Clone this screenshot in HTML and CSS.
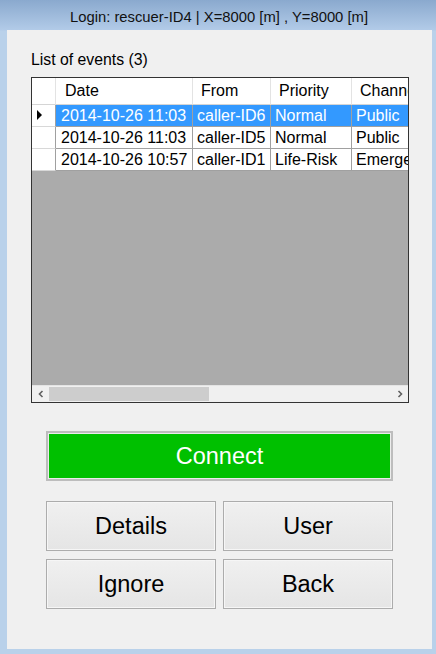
FILE: index.html
```html
<!DOCTYPE html>
<html>
<head>
<meta charset="utf-8">
<link rel="stylesheet" href="styles.css">
</head>
<body>
<div class="window">
  <div class="titlebar">Login: rescuer-ID4 | X=8000 [m] , Y=8000 [m]</div>
  <div class="client">
    <div class="label">List of events (3)</div>
    <div class="grid">
      <div class="row header">
        <div class="c rh"></div>
        <div class="c date">Date</div>
        <div class="c from">From</div>
        <div class="c prio">Priority</div>
        <div class="c chan">Channel</div>
      </div>
      <div class="row data selected">
        <div class="c rh"><span class="tri"></span></div>
        <div class="c date">2014-10-26 11:03</div>
        <div class="c from">caller-ID6</div>
        <div class="c prio">Normal</div>
        <div class="c chan">Public</div>
      </div>
      <div class="row data">
        <div class="c rh"></div>
        <div class="c date">2014-10-26 11:03</div>
        <div class="c from">caller-ID5</div>
        <div class="c prio">Normal</div>
        <div class="c chan">Public</div>
      </div>
      <div class="row data">
        <div class="c rh"></div>
        <div class="c date">2014-10-26 10:57</div>
        <div class="c from">caller-ID1</div>
        <div class="c prio">Life-Risk</div>
        <div class="c chan">Emergency</div>
      </div>
      <div class="empty"></div>
      <div class="hscroll">
        <div class="arrow"><svg width="8" height="8" viewBox="0 0 8 8"><path d="M5.5 1 L2.5 4 L5.5 7" fill="none" stroke="#606060" stroke-width="1.6"/></svg></div>
        <div class="track"><div class="thumb"></div></div>
        <div class="arrow"><svg width="8" height="8" viewBox="0 0 8 8"><path d="M2.5 1 L5.5 4 L2.5 7" fill="none" stroke="#606060" stroke-width="1.6"/></svg></div>
      </div>
    </div>
    <button class="connect">Connect</button>
    <div class="buttons">
      <button class="btn">Details</button>
      <button class="btn">User</button>
      <button class="btn">Ignore</button>
      <button class="btn">Back</button>
    </div>
  </div>
</div>
</body>
</html>
```
FILE: styles.css
```css
html, body {
  margin: 0;
  padding: 0;
}
body {
  width: 436px;
  height: 654px;
  overflow: hidden;
  font-family: "Liberation Sans", Arial, sans-serif;
}
.window {
  width: 436px;
  height: 654px;
  display: flex;
  flex-direction: column;
  background: linear-gradient(to bottom, #8aa9ce 0px, #b2cbe8 30px, #b9d1ea 31px, #b9d1ea 100%);
}
.titlebar {
  height: 30px;
  box-sizing: border-box;
  padding-top: 4px;
  padding-left: 2px;
  display: flex;
  align-items: center;
  justify-content: center;
  font-size: 14.8px;
  color: #111;
}
.client {
  flex: 1;
  margin: 0 4px 5px 7px;
  background: #f0f0f0;
  display: flex;
  flex-direction: column;
  padding-left: 24px;
}
.label {
  margin-top: 21px;
  font-size: 15.8px;
  line-height: 18px;
  color: #000;
}
.grid {
  margin-top: 8px;
  width: 378px;
  height: 326px;
  box-sizing: border-box;
  border: 1px solid #333;
  display: flex;
  flex-direction: column;
  overflow: hidden;
  background: #ababab;
}
.row {
  display: flex;
  flex: none;
  font-size: 16px;
  color: #000;
  white-space: nowrap;
}
.c {
  flex: none;
  box-sizing: border-box;
  overflow: hidden;
}
.rh { width: 24px; }
.date { width: 137px; }
.from { width: 78px; }
.prio { width: 81px; }
.chan { width: 100px; }
.header {
  height: 27px;
  background: #fff;
}
.header .c {
  height: 27px;
  line-height: 26px;
  padding-left: 8px;
  border-right: 1px solid #e3e3e3;
  border-bottom: 1px solid #d5d5d5;
}
.header .date { padding-left: 9px; }
.data .c {
  height: 22px;
  line-height: 21px;
  padding-left: 4px;
  background: #fff;
  border-right: 1px solid #a0a0a0;
  border-bottom: 1px solid #a0a0a0;
}
.data .rh {
  padding-left: 0;
  border-bottom-color: #d8d8d8;
  border-right-color: #a0a0a0;
  display: flex;
  align-items: center;
}
.selected .c {
  background: #3399ff;
  color: #fff;
}
.selected .rh {
  background: #fff;
}
.data .date { padding-left: 5px; }
.tri {
  margin-left: 5px;
  margin-top: -1px;
  width: 0;
  height: 0;
  border-top: 5px solid transparent;
  border-bottom: 5px solid transparent;
  border-left: 5px solid #000;
}
.empty {
  flex: 1;
  background: #ababab;
}
.hscroll {
  height: 17px;
  flex: none;
  display: flex;
  background: #f0f0f0;
  border-top: 1px solid #e4e4e4;
  box-sizing: border-box;
}
.arrow {
  width: 17px;
  flex: none;
  display: flex;
  align-items: center;
  justify-content: center;
}
.track {
  flex: 1;
  display: flex;
  align-items: center;
}
.thumb {
  width: 160px;
  height: 14px;
  background: #cdcdcd;
}
.connect {
  margin-top: 28px;
  margin-left: 15px;
  width: 347px;
  height: 50px;
  box-sizing: border-box;
  border: 2px solid #bdbdbd;
  box-shadow: inset 0 0 0 1px #ececec;
  background: #00c000;
  color: #fff;
  font-family: "Liberation Sans", Arial, sans-serif;
  font-size: 23.5px;
  padding: 0;
  padding-top: 1px;
}
.buttons {
  margin-top: 20px;
  margin-left: 15px;
  display: grid;
  grid-template-columns: 170px 170px;
  grid-auto-rows: 50px;
  column-gap: 7px;
  row-gap: 8px;
}
.btn {
  box-sizing: border-box;
  border: 1px solid #acacac;
  background: linear-gradient(to bottom, #f0f0f0, #e5e5e5);
  box-shadow: inset 0 0 0 1px #f6f6f6;
  color: #000;
  font-family: "Liberation Sans", Arial, sans-serif;
  font-size: 23.5px;
  padding: 0;
}
```
